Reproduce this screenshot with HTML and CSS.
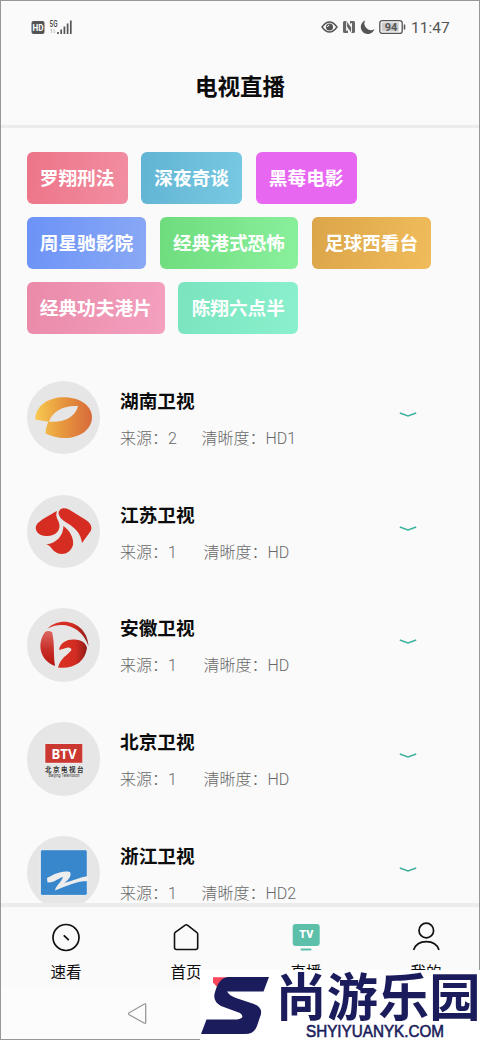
FILE: index.html
```html
<!DOCTYPE html>
<html lang="zh-CN">
<head>
<meta charset="utf-8">
<title>电视直播</title>
<link rel="stylesheet" href="styles.css">
</head>
<body>
<div class="phone">
  <header class="header">
    <div class="status">
      <svg class="status-left" width="42" height="16" viewBox="0 0 42 16">
        <rect x="0.5" y="2" width="13" height="13" rx="2" fill="#555"/>
        <text x="7" y="11.6" class="hd" text-anchor="middle" textLength="11" lengthAdjust="spacingAndGlyphs">HD</text>
        <text x="18.5" y="7.5" class="net" textLength="8" lengthAdjust="spacingAndGlyphs">5G</text>
        <path d="M20.500 14v-4l-1.300 1.300M23 10v4l1.300-1.300" fill="none" stroke="#bbb" stroke-width=".8"/>
        <path d="M27 15v-2M30.200 15v-4.500M33.400 15v-7.500M36.600 15v-10.500M39.800 15v-13.500" stroke="#555" stroke-width="1.700"/>
      </svg>
      <div class="status-right">
        <svg width="17" height="16" viewBox="0 0 17 16"><path d="M1 8C4 3.800 6.500 3 8.500 3S13 3.800 16 8C13 12.200 10.500 13 8.500 13S4 12.200 1 8Z" fill="none" stroke="#555" stroke-width="1.400"/><circle cx="8.500" cy="8" r="3.500" fill="#555"/><path d="M8.300 6.100Q6.700 6.200 6.500 8" fill="none" stroke="#fff"/></svg>
        <svg width="14" height="16" viewBox="0 0 14 16"><path d="M2.500 2h2L9.500 9V6L8 4V2h3.500Q13 2 13 3.500v9Q13 14 11.500 14h-2L4.500 7v3L6 12v2H2.500Q1 14 1 12.500v-9Q1 2 2.500 2Z" fill="#666"/><path d="M4.600 2.500V12M9.500 4v9.500" stroke="#fafafa" stroke-width=".9"/></svg>
        <svg width="15" height="16" viewBox="0 0 15 16"><path d="M5.200 1.500A7 7 0 1 0 14.500 10A6.500 6.500 0 0 1 5.200 1.500Z" fill="#555"/></svg>
        <svg class="battery" width="28" height="16" viewBox="0 0 28 16"><rect x=".8" y="1.600" width="22.400" height="12.800" rx="2.500" fill="#fafafa" stroke="#555" stroke-width="1.300"/><rect x="2.700" y="3.500" width="17" height="9" fill="#ccc"/><path d="M25.500 5.500v5" stroke="#555" stroke-width="1.500"/><text x="12" y="11.900" class="level" text-anchor="middle">94</text></svg>
        <span class="time">11:47</span>
      </div>
    </div>
    <h1 class="title">电视直播</h1>
  </header>
  <main class="main">
    <div class="tags">
      <span class="tag red">罗翔刑法</span><span class="tag cyan">深夜奇谈</span><span class="tag violet">黑莓电影</span>
      <span class="tag blue">周星驰影院</span><span class="tag green">经典港式恐怖</span><span class="tag gold">足球西看台</span>
      <span class="tag pink">经典功夫港片</span><span class="tag mint">陈翔六点半</span>
    </div>
    <section class="channels">
      <article class="channel">
        <svg class="logo" viewBox="0 0 73.500 73.500">
          <defs><linearGradient id="mango"><stop offset="0" stop-color="#f8ca50"/><stop offset=".5" stop-color="#e6953d"/><stop offset="1" stop-color="#d86a3b"/></linearGradient></defs>
          <path fill-rule="evenodd" fill="url(#mango)" d="M8.300 38.500C8.500 24 22 16.300 37 16.300C53 16.300 65 25 65 36C65 49 52 57 38 57C31 57 24 55 18.500 52.500Q19 45 21.500 40.700ZM22 40.500C33 42 48 38 51 25C36 24 25 31 22 40.500Z"/>
        </svg>
        <div class="info"><h2 class="name">湖南卫视</h2><p class="meta"><span class="source wide">来源：2</span><span>清晰度：HD1</span></p></div>
        <svg class="more" viewBox="0 0 18 8"><path d="M.800 2L9 5L17.200 2"/></svg>
      </article>
      <article class="channel">
        <svg class="logo" viewBox="0 0 73.500 73.500"><g fill="#d62d22"><path d="M30 16C24 19 12 26 10 29C6 35 12 41.500 20 41C30 41 34 34 32 28C31 24 28 22 30 16Z"/><path d="M31.500 18C32 13 37 12 42 14.500L59 25C64 28 66 33 63 37L55 48C54 38 47 32 40 28C35 25 32 22 31.500 18Z"/><path d="M36.500 31C43 36 47 43 46 50C43 60 33 61 27 56C24 53 23 50 19 49.500C30 48 36 41 36.500 31Z"/></g></svg>
        <div class="info"><h2 class="name">江苏卫视</h2><p class="meta"><span class="source">来源：1</span><span>清晰度：HD</span></p></div>
        <svg class="more" viewBox="0 0 18 8"><path d="M.800 2L9 5L17.200 2"/></svg>
      </article>
      <article class="channel">
        <svg class="logo" viewBox="0 0 73.500 73.500">
          <defs><linearGradient id="drum" x1="0" y1="0" x2="0" y2="1"><stop offset="0" stop-color="#dc6862"/><stop offset=".5" stop-color="#c9312b"/><stop offset="1" stop-color="#b5140d"/></linearGradient><linearGradient id="drum2"><stop offset="0" stop-color="#db3024"/><stop offset=".6" stop-color="#d32c22"/><stop offset="1" stop-color="#901c18"/></linearGradient></defs>
          <path fill="url(#drum2)" d="M20.500 20.500C34 7 60 14 61.500 38C55 20 38 12 20.500 20.500Z"/>
          <path fill="url(#drum)" d="M18 24Q21 22 25 24C28 36 26 44 28 58C12 52 10 35 18 24Z"/>
          <path fill="url(#drum2)" d="M32 42C33 34 41 31 47 31.500C55 32 59 35 60 40C58 54 47 61 31 59.500C34 49 40 48 44.500 42C43 37 38 41 32 42Z"/>
        </svg>
        <div class="info"><h2 class="name">安徽卫视</h2><p class="meta"><span class="source">来源：1</span><span>清晰度：HD</span></p></div>
        <svg class="more" viewBox="0 0 18 8"><path d="M.800 2L9 5L17.200 2"/></svg>
      </article>
      <article class="channel">
        <svg class="logo" viewBox="0 0 73.500 73.500"><rect x="17.700" y="21.500" width="38.200" height="20" fill="#f5eeee"/><rect x="18.300" y="22" width="37" height="18.800" fill="#cb3831"/><text class="btv" x="37" y="36.700" text-anchor="middle" textLength="25" lengthAdjust="spacingAndGlyphs">BTV</text><text class="btv-cn" x="18" y="50.100" textLength="38.500">北京电视台</text><text class="btv-en" x="21.500" y="54.700" textLength="31" lengthAdjust="spacingAndGlyphs">Beijing Television</text></svg>
        <div class="info"><h2 class="name">北京卫视</h2><p class="meta"><span class="source">来源：1</span><span>清晰度：HD</span></p></div>
        <svg class="more" viewBox="0 0 18 8"><path d="M.800 2L9 5L17.200 2"/></svg>
      </article>
      <article class="channel">
        <svg class="logo" viewBox="0 0 73.500 73.500"><rect x="13.300" y="13.700" width="47" height="45.700" rx="2" fill="#3887cd" stroke="#f2f2f2"/><path fill="#ededed" d="M20 42C26 39 34 34 43 36C45 39 42 44 37 47C45 45 53 41 61 40V45C50 45 40 50 28 54.500C29 49 34 47 36 41C31 42 28 47 20.500 46.500Z"/></svg>
        <div class="info"><h2 class="name">浙江卫视</h2><p class="meta"><span class="source wide">来源：1</span><span>清晰度：HD2</span></p></div>
        <svg class="more" viewBox="0 0 18 8"><path d="M.800 2L9 5L17.200 2"/></svg>
      </article>
    </section>
  </main>
  <nav class="tabs">
    <div class="tab"><svg width="32" height="32" viewBox="0 0 32 32"><circle cx="16" cy="16.500" r="13" fill="none" stroke="#111" stroke-width="1.700"/><path d="M14.300 14.800l4 3.800" stroke="#111" stroke-width="1.800" stroke-linecap="round"/></svg><span>速看</span></div>
    <div class="tab"><svg width="32" height="32" viewBox="0 0 32 32"><path d="M4.500 12.800Q4.500 12 5.200 11.400L15.200 4.200Q16.300 3.400 17.400 4.200L26.700 11.400Q27.700 12 27.700 13V26.500Q27.700 28.500 25.700 28.500H6.500Q4.500 28.500 4.500 26.500Z" fill="none" stroke="#111" stroke-width="1.600"/></svg><span>首页</span></div>
    <div class="tab"><svg width="32" height="32" viewBox="0 0 32 32"><rect x="2.700" y="3" width="27" height="22" rx="3" fill="#5bbfaa"/><path d="M11.500 28.500h9" stroke="#5bbfaa" stroke-width="2" stroke-linecap="round"/><text x="16.300" y="17.200" class="tv" text-anchor="middle" textLength="14" lengthAdjust="spacingAndGlyphs">TV</text></svg><span>直播</span></div>
    <div class="tab"><svg width="32" height="32" viewBox="0 0 32 32"><circle cx="16.300" cy="9.500" r="7.300" fill="none" stroke="#111" stroke-width="1.700"/><path d="M3.600 29C5.500 23.500 10.500 20.700 16.300 20.700S27.200 23.500 29 29" fill="none" stroke="#111" stroke-width="1.700"/></svg><span>我的</span></div>
  </nav>
  <footer class="system"><svg width="22" height="24" viewBox="0 0 22 24"><path d="M2.200 10.700L17 2.200Q18.700 1.300 18.700 3V20.400Q18.700 22 17 21L2.200 12.700Q.800 11.700 2.200 10.700Z" fill="none" stroke="#999" stroke-width="1.300"/></svg></footer>
</div>
<div class="watermark">
  <svg width="280" height="70" viewBox="0 0 280 70">
    <path d="M13 7.300H29L18 18L13 12.500Z" fill="#fb465b"/>
    <path fill="#1b1c5c" d="M29 7H69L63.500 21.500H27Q30 26 36 28L54 34Q64 38 60 47L57 56Q54 64 45 64H1L6.500 49.500H37Q46 48 40 43L21 36Q12 31 15 22Q19 7 29 7Z"/>
    <text class="mark-cn" x="75.500" y="46" textLength="205" lengthAdjust="spacingAndGlyphs">尚游乐园</text>
    <text class="mark-en" x="106" y="67" textLength="138" lengthAdjust="spacingAndGlyphs">SHYIYUANYK.COM</text>
  </svg>
</div>
</body>
</html>
```
FILE: styles.css
```css
* { box-sizing: border-box; }
body { margin: 0; font-family: Roboto, "Noto Sans CJK SC", sans-serif; color: #0c0c0c; }
.phone {
  width: 480px;
  height: 1040px;
  border: 1px solid #979797;
  background: #fafafa;
  display: flex;
  flex-direction: column;
  overflow: hidden;
}
.header { height: 127px; flex: none; border-bottom: 3px solid #ebebeb; }
.status { height: 52px; padding: 0 30px; display: flex; align-items: center; justify-content: space-between; }
.status-left { display: block; }
.status-right { display: flex; align-items: center; gap: 4px; }
.status-right svg { display: block; }
.time { font-size: 15.500px; line-height: 20px; color: #555; width: 38px; padding-top: 1px; }
.hd { font: 700 8.500px Roboto; fill: #fff; }
.net { font: 500 8.500px Roboto; fill: #444; }
.level { font: 700 11px Roboto; fill: #555; }
.title { margin: 16.500px 0 0; text-align: center; font-size: 22.500px; line-height: 34px; font-weight: 700; }
.main { height: 775px; flex: none; overflow: hidden; padding: 23.500px 26px 0 25.500px; }
.tags { display: flex; flex-wrap: wrap; gap: 13.300px; }
.tag {
  height: 52px;
  padding: 1px 13.300px 0;
  border-radius: 6px;
  color: #fff;
  font-size: 18.670px;
  line-height: 53px;
  font-weight: 700;
}
.red { background: linear-gradient(100deg, #ed7488, #f28ea2); }
.cyan { background: linear-gradient(100deg, #61b4d3, #78c9e2); }
.violet { background: #e767f1; }
.blue { background: linear-gradient(100deg, #6b92f7, #8aa9f5); }
.green { background: linear-gradient(100deg, #6edc7d, #8af09d); }
.gold { background: linear-gradient(100deg, #dba549, #f0bc5b); }
.pink { background: linear-gradient(100deg, #ea8aa9, #f4a0bf); }
.mint { background: linear-gradient(100deg, #7be4bf, #8af0cd); }
.channels { margin-top: 46.700px; }
.channel { height: 113.800px; display: flex; align-items: flex-start; }
.logo { width: 73.500px; height: 73.500px; border-radius: 50%; background: #e6e6e6; flex: none; }
.info { margin-left: 20px; flex: 1; }
.name { margin: 8px 0 0; font-size: 18.670px; line-height: 27px; font-weight: 700; }
.meta { margin: 11px 0 0; display: flex; font-size: 16px; line-height: 24px; color: #686868; font-weight: 300; }
.source { width: 83.500px; }
.source.wide { width: 81.500px; }
.more { width: 18px; height: 8px; margin: 30px 36px 0 0; fill: none; stroke: #3eb19d; stroke-width: 1.500; }
.btv { font: 700 14px "Noto Sans", sans-serif; fill: #fff; }
.btv-cn { font: 700 6.500px "Noto Sans CJK SC", sans-serif; fill: #333; }
.btv-en { font: 4.500px Roboto, sans-serif; fill: #444; }
.tabs { height: 85px; flex: none; border-top: 4px solid #ebebeb; padding: 14px 0 0 5px; display: grid; grid-template-columns: repeat(4, 120px); }
.tab { display: flex; flex-direction: column; align-items: center; font-size: 15.500px; line-height: 24px; gap: 7.500px; }
.tab svg { display: block; }
.tv { font: 900 10px Roboto, sans-serif; fill: #fff; }
.system { flex: 1; background: #fcfcfc; padding: 14px 0 0 126px; }
.watermark { position: absolute; left: 200px; top: 970px; width: 280px; height: 70px; background: #fff; }
.watermark svg { display: block; }
.mark-cn { font: 700 51.500px "Noto Sans CJK SC", sans-serif; fill: #1b1c5c; }
.mark-en { font: 400 17px "Liberation Sans", sans-serif; fill: #1b1c5c; stroke: #1b1c5c; stroke-width: 0.600px; }
```
